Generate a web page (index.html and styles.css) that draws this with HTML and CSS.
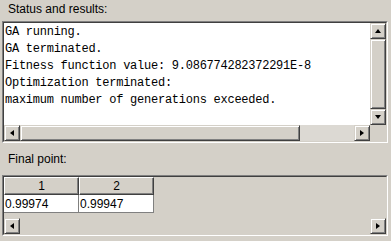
FILE: index.html
```html
<!DOCTYPE html>
<html lang="en">
<head>
  <meta charset="UTF-8" />
  <title>Status and results</title>
  <link rel="stylesheet" href="styles.css">
</head>
<body>

  <div class="label first">Status and results:</div>

  <div class="pane">
    <div class="pane-inner status">
      <pre class="output">GA running.
GA terminated.
Fitness function value: 9.086774282372291E-8
Optimization terminated:
maximum number of generations exceeded.</pre>

      <div class="vscroll">
        <div class="btn"><span class="arrow up"></span></div>
        <div class="thumb"></div>
        <div class="btn"><span class="arrow down"></span></div>
      </div>

      <div class="hscroll">
        <div class="btn"><span class="arrow left"></span></div>
        <div class="thumb wide"></div>
        <div class="track"></div>
        <div class="btn"><span class="arrow right"></span></div>
      </div>
      <div class="corner"></div>
    </div>
  </div>

  <div class="label second">Final point:</div>

  <div class="pane">
    <div class="pane-inner points">
      <div class="grid">
        <div class="head">1</div>
        <div class="head">2</div>
        <div class="cell">0.99974</div>
        <div class="cell">0.99947</div>
      </div>

      <div class="hscroll">
        <div class="btn"><span class="arrow left"></span></div>
        <div class="track plain"></div>
        <div class="btn"><span class="arrow right"></span></div>
      </div>
    </div>
  </div>

</body>
</html>
```

FILE: styles.css
```css
* {
  box-sizing: border-box;
}
body {
  margin: 0;
  width: 391px;
  height: 241px;
  overflow: hidden;
  background: #d4d0c8;
  font-family: 'Liberation Sans', Arial, sans-serif;
  font-size: 12px;
  color: #000;
}

.label {
  padding-left: 8px;
  line-height: 15px;
}
.label.first {
  height: 21px;
  padding-top: 2px;
}
.label.second {
  height: 32px;
  padding-top: 9px;
}

/* sunken 2px border */
.pane {
  margin: 0 3px 0 2px;
  border: 1px solid;
  border-color: #808080 #fff #fff #808080;
}
.pane-inner {
  border: 1px solid;
  border-color: #404040 #d4d0c8 #d4d0c8 #404040;
}

.status {
  display: grid;
  grid-template-columns: 366px 16px;
  grid-template-rows: 102px 16px;
}

.output {
  margin: 0;
  padding: 1px 0 0 1px;
  background: #fff;
  font-family: 'Courier New', 'Nimbus Mono PS', 'FreeMono', 'Liberation Mono', monospace;
  font-size: 12px;
  letter-spacing: -0.25px;
  line-height: 17px;
  overflow: hidden;
}

/* scrollbars */
.vscroll {
  display: flex;
  flex-direction: column;
  background: #dcd9d3;
}
.hscroll {
  display: flex;
  height: 16px;
  background: #dcd9d3;
}
.corner {
  background: #d4d0c8;
}

.btn, .thumb {
  flex: none;
  width: 16px;
  height: 16px;
  background: #d4d0c8;
  border: 1px solid;
  border-color: #d4d0c8 #404040 #404040 #d4d0c8;
  box-shadow: inset 1px 1px #fff, inset -1px -1px #808080;
  display: flex;
  align-items: center;
  justify-content: center;
}
.vscroll .thumb {
  height: 70px;
}
.thumb.wide {
  width: 280px;
}
.track {
  flex: 1;
}
.track.plain {
  background: #d4d0c8;
}

.arrow {
  width: 0;
  height: 0;
}
.arrow.up {
  width: 1px;
  border-left: 3px solid transparent;
  border-right: 3px solid transparent;
  border-bottom: 4px solid #000;
  margin-top: -1px;
}
.arrow.down {
  width: 1px;
  border-left: 3px solid transparent;
  border-right: 3px solid transparent;
  border-top: 4px solid #000;
}
.arrow.left {
  height: 1px;
  border-top: 3px solid transparent;
  border-bottom: 3px solid transparent;
  border-right: 4px solid #000;
  margin-left: -1px;
}
.arrow.right {
  height: 1px;
  border-top: 3px solid transparent;
  border-bottom: 3px solid transparent;
  border-left: 4px solid #000;
}

/* final point table */
.points {
  height: 59px;
  display: flex;
  flex-direction: column;
  justify-content: space-between;
}
.grid {
  display: grid;
  grid-template-columns: 75px 75px;
}
.head {
  height: 18px;
  line-height: 16px;
  text-align: center;
  background: #d4d0c8;
  border: 1px solid;
  border-color: #fff #404040 #404040 #fff;
  box-shadow: inset -1px -1px #808080;
}
.cell {
  height: 18px;
  padding: 1px 0 0 1px;
  line-height: 16px;
  background: #fff;
  border-right: 1px solid #808080;
  border-bottom: 1px solid #808080;
}
```
